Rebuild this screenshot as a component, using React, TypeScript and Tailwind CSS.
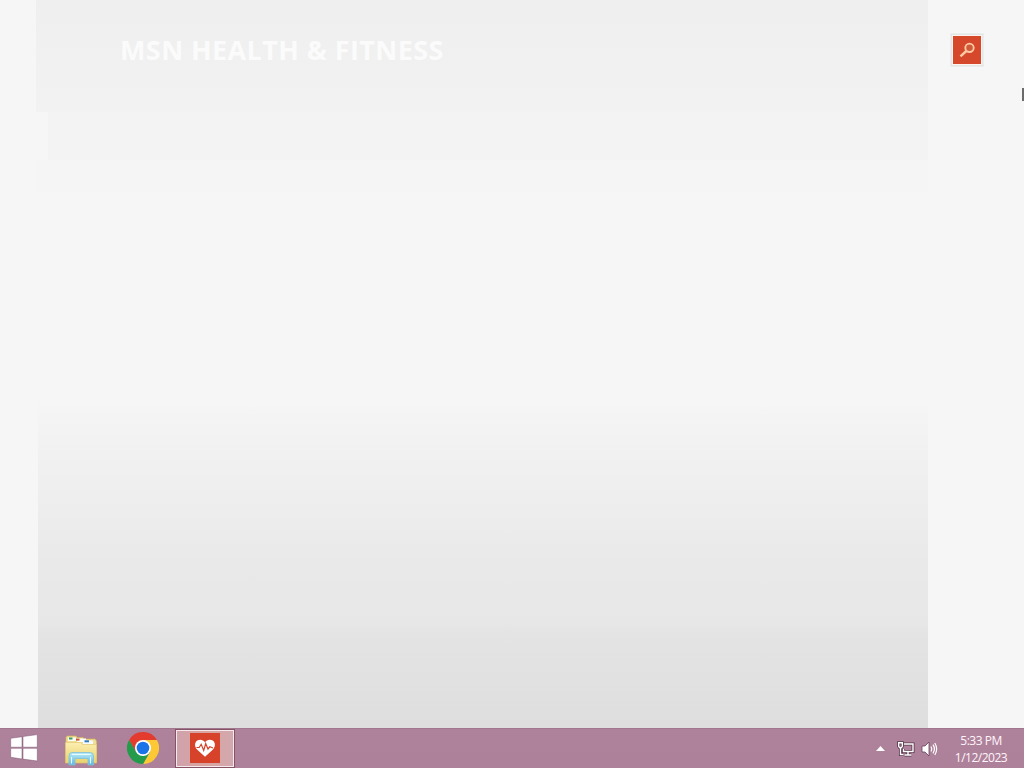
import React from "react";

function WindowsLogo() {
  return (
    <svg width="28" height="28" viewBox="0 0 28 28">
      <g fill="#fff" stroke="#7d5470" strokeOpacity="0.7" strokeWidth="0.7">
        <path d="M0.700 4.300 12 2.700v10.500H0.700z" />
        <path d="M13 2.500 27.300 0.600v12.600H13z" />
        <path d="M0.700 14.300H12v10.700L0.700 23.300z" />
        <path d="M13 14.300h14.300V27L13 25.100z" />
      </g>
    </svg>
  );
}

function ExplorerIcon() {
  return (
    <svg width="34" height="32" viewBox="0 0 34 32">
      <defs>
        <linearGradient id="folder" x1="0" y1="0" x2="0" y2="1">
          <stop offset="0" stopColor="#fbeeb0" />
          <stop offset="1" stopColor="#e9d26c" />
        </linearGradient>
        <linearGradient id="stand" x1="0" y1="0" x2="0" y2="1">
          <stop offset="0" stopColor="#b9eaf7" />
          <stop offset="1" stopColor="#62b9df" />
        </linearGradient>
      </defs>
      <path d="M2 3.5 3 2h9l1 1.500h6L20 5h11l1.500 2v21H2z" fill="#f0de96" stroke="#d3b65c" strokeWidth="0.7" />
      <path d="M4 3.500h8v3.500H4zM13 4.500h9v3.500h-9z" fill="#fffef4" />
      <path d="M5 3.500h3.500v2H5z" fill="#3d9860" />
      <path d="M12 4.600h3.500v2H12z" fill="#c9583e" />
      <path d="M19 6.500h10v4H19z" fill="#f5fcff" />
      <path d="M20.500 6.300H25v2h-4.500z" fill="#317bc1" />
      <path d="M1.500 8.500h15l2 2h14V29h-31z" fill="url(#folder)" stroke="#e0c76c" strokeWidth="0.6" />
      <path
        d="M5 31v-9Q5 18.500 8 18.500h18.500q3 0 3 3.500v9H24v-6.500H11V31z"
        fill="url(#stand)"
        stroke="#7cc0d8"
        strokeWidth="0.8"
      />
      <path d="M8 20.500h18.500M7.500 23v6.500M26.500 23v6.500" stroke="#e8fbff" strokeWidth="1" fill="none" />
    </svg>
  );
}

function ChromeIcon() {
  return (
    <svg width="32" height="32" viewBox="0 0 32 32">
      <path d="M2.140 8A16 16 0 0 1 29.860 8L16 8 9.070 20z" fill="#e33b2e" />
      <path d="M29.860 8A16 16 0 0 1 16 32L22.930 20 16 8z" fill="#fcc934" />
      <path d="M16 32A16 16 0 0 1 2.140 8L9.070 20 16 24 22.930 20z" fill="#249a4b" />
      <circle cx="16" cy="16" r="8" fill="#fff" />
      <circle cx="16" cy="16" r="6.300" fill="#1b73e8" />
    </svg>
  );
}

function HealthIcon() {
  return (
    <svg width="30" height="30" viewBox="0 0 30 30">
      <path fill="#d6432a" d="M0 0h30v30H0z" />
      <path
        d="M15 23.800 7 16.500C4.300 13.600 4.500 9.600 7.300 7.600c2.700-1.700 6-.9 7.700 1.700 1.700-2.600 5-3.400 7.700-1.700 2.800 2 3 6 .3 8.900z"
        fill="#fff"
      />
      <path
        d="M6.500 14.500h2.700l2-3.200 2.500 6.200 2-7 2.300 5.500 1.800-2.200L23 15"
        fill="none"
        stroke="#d6432a"
        strokeWidth="1.200"
      />
    </svg>
  );
}

function NetworkIcon() {
  return (
    <svg width="18" height="16" viewBox="0 0 18 16" fill="none">
      <path d="M7 3h9v7.500H6.500V8M11 11v3M7.500 14h7M3.500 7v6.500h3M1.700 1.700h3.600v3.600L4.500 6.500h-2l-.8-1.200z" stroke="#553448" strokeWidth="3" />
      <path d="M7 3h9v7.500H6.500V8M11 11v3M7.500 14h7M3.500 7v6.500h3M1.700 1.700h3.600v3.600L4.500 6.500h-2l-.8-1.200z" stroke="#fff" strokeWidth="1.400" />
    </svg>
  );
}

function VolumeIcon() {
  return (
    <svg width="17" height="16" viewBox="0 0 17 16">
      <path d="M1 5h3l4-4v14l-4-4H1z" fill="#fff" stroke="#65405a" strokeWidth="0.8" />
      <g fill="none" stroke="#fff" strokeWidth="1.200">
        <path d="M10 5.500q1.600 2.500 0 5" />
        <path d="M12 3.700q2.800 4.300 0 8.600" />
        <path d="M13.800 2q3.700 6 0 12" />
      </g>
    </svg>
  );
}

function Taskbar() {
  return (
    <footer className="flex h-10 shrink-0 border-t border-[#a17790] bg-linear-to-b from-[#af829b] to-[#ad8199]">
      <div className="flex w-[47px] items-center pb-0.5 pl-2.5">
        <WindowsLogo />
      </div>
      <div className="flex w-[68px] items-center justify-center pt-0.5">
        <ExplorerIcon />
      </div>
      <div className="flex w-[60px] items-center pb-0.5 pl-3">
        <ChromeIcon />
      </div>
      <div className="flex h-[39px] w-[60px] items-center justify-center border border-[#865266] bg-[#d6a3a5]">
        <div className="flex h-full w-full items-center justify-center border border-[#f6e8eb] bg-linear-to-r from-[#cfa2ac] via-[#daa49f] to-[#d2a8af] pb-0.5">
          <HealthIcon />
        </div>
      </div>
      <div className="ml-auto flex items-center text-[#fff5fb]">
        <svg className="mr-3" width="9" height="5" viewBox="0 0 9 5">
          <path d="M0 5 4.500 0 9 5z" fill="#fff" />
        </svg>
        <NetworkIcon />
        <div className="ml-1.5">
          <VolumeIcon />
        </div>
        <div className="mr-3.5 ml-3.5 w-[58px] text-center font-['Open_Sans',sans-serif] text-[12px] leading-[17px] tracking-[-0.5px] whitespace-nowrap">
          <div>5:33 PM</div>
          <div>1/12/2023</div>
        </div>
      </div>
    </footer>
  );
}

export default function App() {
  return (
    <div className="flex h-[768px] w-[1024px] flex-col overflow-hidden bg-[#f6f6f6]">
      <div className="flex min-h-0 flex-1">
        <main className="ml-9 flex w-[892px] flex-col">
          <header className="h-28 bg-linear-to-b from-[#efefef] to-[#f2f2f2] pt-8 pl-[84px]">
            <h1 className="font-['Open_Sans',sans-serif] text-[27px] leading-9 font-bold tracking-[0.4px] whitespace-nowrap text-[#fbfbfb]">
              MSN HEALTH &amp; FITNESS
            </h1>
          </header>
          <div className="ml-3 h-12 bg-[#f3f3f3]" />
          <div className="h-8 bg-[#f5f5f5]" />
          <div className="mt-[208px] ml-0.5 flex-1 bg-[linear-gradient(to_bottom,#f6f6f6_0%,#f2f2f2_12%,#eeeeee_30%,#e9e9e9_50%,#e7e7e7_68%,#e4e4e4_71%,#dedede_100%)]" />
        </main>
        <aside className="flex flex-1 flex-col items-end">
          <button className="mt-[34px] mr-[41px] flex size-8 items-center justify-center border border-[#e3e6e6] bg-[#fff5ee] outline-1 outline-[#eceeee]">
            <svg width="28" height="28" viewBox="0 0 28 28" fill="none">
              <path d="M0 0h28v28H0z" fill="#d5482b" />
              <circle cx="16.500" cy="11.800" r="4.200" fill="#cf5a38" stroke="#ffc9a5" strokeWidth="1.900" />
              <path d="m13.300 15-5.800 5.300" stroke="#ffc9a5" strokeWidth="2.400" />
            </svg>
          </button>
          <div className="mt-[22px] h-[13px] w-0.5 bg-[#6b6b6b]" />
        </aside>
      </div>
      <Taskbar />
    </div>
  );
}
